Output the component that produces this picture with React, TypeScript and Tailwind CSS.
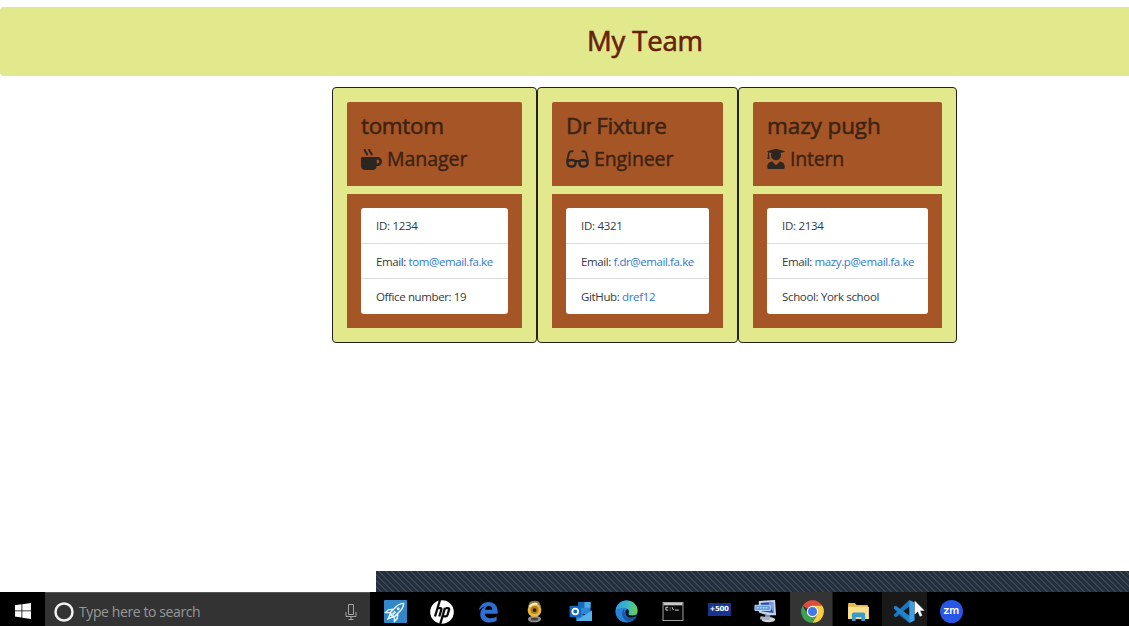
import React from "react";
import { FaGlasses, FaMugHot, FaUserGraduate } from "react-icons/fa";

type Row = { label: string; value: string; link?: boolean; tracking: string };
type Member = {
  name: string;
  nameClass: string;
  role: string;
  roleClass: string;
  width: string;
  icon: React.ReactNode;
  rows: Row[];
};

const team: Member[] = [
  {
    name: "tomtom",
    nameClass: "tracking-[-0.35px]",
    role: "Manager",
    roleClass: "tracking-[-0.05px]",
    width: "w-[205px]",
    icon: <FaMugHot className="mr-[5px] size-[21px]" />,
    rows: [
      { label: "ID: ", value: "1234", tracking: "tracking-[-0.3px]" },
      { label: "Email: ", value: "tom@email.fa.ke", link: true, tracking: "tracking-[-0.39px]" },
      { label: "Office number: ", value: "19", tracking: "tracking-[-0.38px]" },
    ],
  },
  {
    name: "Dr Fixture",
    nameClass: "tracking-[-0.35px]",
    role: "Engineer",
    roleClass: "tracking-[-0.1px]",
    width: "w-[201px]",
    icon: <FaGlasses className="mr-[5px] h-[20px] w-[23px]" />,
    rows: [
      { label: "ID: ", value: "4321", tracking: "tracking-[-0.3px]" },
      { label: "Email: ", value: "f.dr@email.fa.ke", link: true, tracking: "tracking-[-0.41px]" },
      { label: "GitHub: ", value: "dref12", link: true, tracking: "tracking-[-0.36px]" },
    ],
  },
  {
    name: "mazy pugh",
    nameClass: "tracking-[-0.1px]",
    role: "Intern",
    roleClass: "tracking-[-0.2px]",
    width: "w-[219px]",
    icon: <FaUserGraduate className="mr-[5px] h-[20px] w-[18px]" />,
    rows: [
      { label: "ID: ", value: "2134", tracking: "tracking-[-0.3px]" },
      { label: "Email: ", value: "mazy.p@email.fa.ke", link: true, tracking: "tracking-[-0.39px]" },
      { label: "School: ", value: "York school", tracking: "tracking-[-0.34px]" },
    ],
  },
];

function Card({ m }: { m: Member }) {
  return (
    <article className={`${m.width} h-[256px] shrink-0 rounded-[4px] border border-[#22231c] bg-[#e2e88c] p-[14px]`}>
      <header className="h-[84px] rounded-t-[2px] bg-[#a65526] pt-[10px] pr-[14px] pl-[14px] text-[#3b2314]">
        <h2 className={`h-[28px] text-[22.5px] leading-[28px] whitespace-nowrap [-webkit-text-stroke:0.5px] ${m.nameClass}`}>{m.name}</h2>
        <h3 className="mt-[6px] flex h-[26px] items-center text-[19.5px] leading-[26px] whitespace-nowrap">
          <span className="text-[#2b2622]">{m.icon}</span>
          <span className={`[-webkit-text-stroke:0.4px] ${m.roleClass}`}>{m.role}</span>
        </h3>
      </header>
      <div className="mt-2 h-[134px] bg-[#a65526] px-[14px] pt-[14px]">
        <ul className="overflow-hidden rounded-[3px] bg-white text-[11.5px] text-[#343a40]">
          {m.rows.map((r) => (
            <li key={r.label} className={`flex h-[35px] items-center border-b border-[#dcdcdc] pt-[1px] pl-[15px] whitespace-pre first:h-[36px] last:border-b-0 last:pb-[1px] ${r.tracking}`}>
              <span>{r.label}</span>
              <span className={r.link ? "text-[#3179cf]" : ""}>{r.value}</span>
            </li>
          ))}
        </ul>
      </div>
    </article>
  );
}

const Rocket = () => (
  <svg viewBox="0 0 24 24" className="size-[23px]">
    <rect width="24" height="24" rx="1" fill="#3287c8" />
    <g transform="rotate(45 12 12)">
      <path d="M12 0c3 3 3.500 7 3 11L15 17H9v-6C8.500 7 9 3 12 0zM8.500 12l-3 4v4l3.500-3zM15.500 12l3 4v4L15 17zM10 18h4l-2 5z" fill="none" stroke="#e8f4fb" strokeWidth="1.500" />
      <circle cx="12" cy="8" r="1.500" fill="#e8f4fb" />
      <path d="M11 12h2v4h-2z" fill="#e8f4fb" />
    </g>
  </svg>
);

const Hp = () => (
  <svg viewBox="0 0 24 24" className="size-[24px]">
    <circle cx="12" cy="12" r="11.800" fill="#fff" />
    <path d="M10 0 5 16.500M8 8.200h2.300q1.500 0 1 1.600L9.300 16.500M15 7.800 10.200 24M15.500 8.200h2.400q1.600 0 1.100 1.600l-1.500 5q-.5 1.500-2 1.500h-2" fill="none" stroke="#090909" strokeWidth="2.300" />
  </svg>
);

const LegacyEdge = () => (
  <svg viewBox="0 0 24 24" className="size-[22px]">
    <path d="M2 10.6C3 4.5 7.400 1 12.700 1c6 0 9.800 4.300 9.800 9.800v3H8.600c.2 3.300 3.100 4.900 6.400 4.900 2.500 0 4.500-.7 6.400-1.800v4.700c-2 1.200-4.600 1.900-7.700 1.900-6.300 0-10.200-3.600-10.200-9.100 0-3.800 2-6.900 5.600-8.300C5.900 6.600 3.600 8.300 2 10.600zM8.700 9.600h8c0-2.700-1.300-4.200-3.700-4.200S9 7 8.700 9.600z" fill="#2f6fd2" />
  </svg>
);

const Medal = () => (
  <svg viewBox="0 0 18 24" className="h-[23px] w-[17px]">
    <path d="M4 2q5-3 10 0l2 5H2z" fill="#8c7544" />
    <ellipse cx="9" cy="20" rx="7" ry="3.500" fill="#8e8e8e" />
    <ellipse cx="9" cy="20" rx="4" ry="1.600" fill="#444" />
    <circle cx="9" cy="10.500" r="7.300" fill="#e9b540" />
    <circle cx="9" cy="10.500" r="4.200" fill="#b27b1f" />
    <circle cx="9" cy="10.500" r="2" fill="#2b1e08" />
    <path d="M4 7q2-4 8-3" fill="none" stroke="#fff2b0" strokeWidth="2" />
  </svg>
);

const Outlook = () => (
  <svg viewBox="0 0 24 22" className="h-[21px] w-[24px]">
    <path d="M9 1h13v13H9z" fill="#2b86d9" />
    <path d="M15.500 1H22v6h-6.500z" fill="#4aa9e6" />
    <path d="M9 1h6.500v6H9z" fill="#1767ba" />
    <path d="M7 21h16.500V10L15 15 7 11z" fill="#2f8fdb" />
    <path d="m7 21 16.500-11v11z" fill="#58b2ea" />
    <rect y="5" width="12" height="12" rx="1" fill="#1467bc" />
    <circle cx="6" cy="11" r="3" fill="none" stroke="#fff" strokeWidth="1.800" />
  </svg>
);

const Edge = () => (
  <svg viewBox="0 0 24 24" className="size-[23px]">
    <defs>
      <linearGradient id="edgeTop" x1="0" y1="0.300" x2="1" y2="0.500">
        <stop offset="0" stopColor="#2d9ce0" />
        <stop offset=".5" stopColor="#39b8c5" />
        <stop offset="1" stopColor="#68ce55" />
      </linearGradient>
    </defs>
    <circle cx="12" cy="12" r="11.500" fill="#2784d8" />
    <path d="M.7 11C1.300 5 6 .5 12 .5c7 0 11.500 5 11.500 10 0 3.500-2.500 6-6 6-2.600 0-4-1-3.500-2 2-3-.2-6.500-4.500-6.500C5.500 8 2 9 .7 11z" fill="url(#edgeTop)" />
    <path d="M9.500 9C6 12 7 20 13 22.500c4 .8 7.500-1.500 9.500-5-4 2-10 1-12-3-.8-2-.6-4-1-5.500z" fill="#1958a5" />
    <path d="M13.800 14.700c1.200-1.600.8-4-1-5.200-2.300 1-2.500 4.500-.8 7 2.500 3 7.500 2.500 11.500-.3l1-2c-3 2.300-10.200 2.600-10.700.5z" fill="#041320" />
  </svg>
);

const Terminal = () => (
  <svg viewBox="0 0 22 20" className="h-[19px] w-[22px]">
    <rect x=".5" y=".5" width="21" height="19" fill="#090909" stroke="#a9a9a9" />
    <path d="M1 1h20v2.500H1z" fill="#c8c8c8" />
    <path d="M6 5.500H3.500v3H6M8 6v.8M8 8v.8M10 5.500l1.500 3M13 8.500h4" fill="none" stroke="#ddd" />
  </svg>
);

const Computer = () => (
  <svg viewBox="0 0 24 24" className="size-[23px]">
    <path d="m5 1 17-1 1 16-9 0L5 13z" fill="#c7d4e8" />
    <path d="m7 3 13-1 .5 11.500L8 12z" fill="#2949ae" />
    <path d="m15 2.500 5-.5v11z" fill="#799de2" />
    <path d="M1 5.500h16V11H1z" fill="#609de3" stroke="#c1dafa" />
    <path d="M3 8.200h12" stroke="#e4f2ff" strokeDasharray="2 1" />
    <path d="m12 15 5 1v3h-6z" fill="#8895a9" />
    <ellipse cx="15" cy="20.500" rx="7" ry="2.800" fill="#d2d6dc" />
    <path d="m7 17 10 1-1 3-10-1z" fill="#aab3c0" />
  </svg>
);

const Chrome = () => (
  <svg viewBox="0 0 24 24" className="size-[23px]">
    <path d="M12 12 1.780 6.100A11.800 11.800 0 0 1 22.220 6.100z" fill="#dd4c3e" />
    <path d="M12 12V6.100h10.220A11.800 11.800 0 0 1 12 23.800l-.2 0 5.300-8.900z" fill="#fbcd42" />
    <path d="M12 12l5.110 2.950L12 23.800A11.800 11.800 0 0 1 1.780 6.100l5.110 8.850z" fill="#3f9f52" />
    <circle cx="12" cy="12" r="6" fill="#f4f4f4" />
    <circle cx="12" cy="12" r="4.700" fill="#4078e6" />
  </svg>
);

const Folder = () => (
  <svg viewBox="0 0 22 19" className="h-[18px] w-[21px]">
    <path d="M0 1q0-1 1-1h6l2 2h11q1 0 1 1v14H0z" fill="#e7b84d" />
    <path d="M0 4h22v13H0z" fill="#fae18b" />
    <path d="M4 19v-7q0-2 2-2h10q2 0 2 2v7h-4v-4H8v4z" fill="#3b9acb" />
  </svg>
);

const Code = () => (
  <svg viewBox="0 0 24 24" className="size-[23px]">
    <path d="m17 0-10 9-4-3-2 1.200v1.600L17 24l1-6-12-9.500z" fill="#1f75bd" transform="matrix(1 0 0 -1 0 24)" />
    <path d="m1 7 2-1 15 11-1 7L1 9z" fill="#2382cc" />
    <path d="m17 0 5.500 2.500v19L17 24z" fill="#3ca0e7" />
  </svg>
);

const Cursor = () => (
  <svg viewBox="0 0 12 19" className="absolute top-[8px] left-[32px] h-[18px] w-[11px]">
    <path d="M1 1v14l3.200-3 2.300 5.500 2.200-1L6.500 11H11z" fill="#fff" stroke="#fff" strokeWidth=".5" />
  </svg>
);

const apps: { name: string; box: string; icon: React.ReactNode }[] = [
  { name: "rocket", box: "w-[50px]", icon: <Rocket /> },
  { name: "hp", box: "w-[43px]", icon: <Hp /> },
  { name: "legacy", box: "w-[50px]", icon: <LegacyEdge /> },
  { name: "medal", box: "w-[43px]", icon: <Medal /> },
  { name: "outlook", box: "w-[49px]", icon: <Outlook /> },
  { name: "edge", box: "w-[43px]", icon: <Edge /> },
  { name: "terminal", box: "w-[49px]", icon: <Terminal /> },
  {
    name: "trading",
    box: "w-[44px]",
    icon: <span className="mb-[5px] flex h-[13px] w-[23px] items-center justify-center bg-[#17348f] font-['DejaVu_Sans'] text-[7px] font-bold tracking-[-0.4px] text-white">+500</span>,
  },
  { name: "computer", box: "w-[49px]", icon: <Computer /> },
  { name: "chrome", box: "w-[43px] bg-[#343434] border-r border-[#1b1b1b] pl-[2px]", icon: <Chrome /> },
  { name: "folder", box: "w-[49px] pl-[2px]", icon: <Folder /> },
  { name: "code", box: "relative w-[45px] bg-[#191919]", icon: <><Code /><Cursor /></> },
  {
    name: "zoom",
    box: "w-[47px] pl-[1px]",
    icon: <span className="flex size-[23px] items-center justify-center rounded-full bg-[#2857e5] pb-[2px] font-['Inter'] text-[11px] font-semibold tracking-[-0.2px] text-white">zm</span>,
  },
];

function Taskbar() {
  return (
    <footer className="flex h-[34px] w-full bg-black">
      <div className="flex w-[45px] items-center justify-center pt-[3px]">
        <svg viewBox="0 0 16 16" className="size-[16px]">
          <path d="M0 2.300 6.500 1.300v6.200H0zM7.300 1.200 16 0v7.500H7.300zM0 8.300h6.500v6.200L0 13.600zM7.300 8.300H16V16l-8.700-1.300z" fill="#fff" />
        </svg>
      </div>
      <div className="flex w-[325px] items-center border-t border-[#555] bg-[#333] pt-[4px] pr-[13px] pl-[9px]">
        <svg viewBox="0 0 20 20" className="size-[20px]">
          <circle cx="10" cy="10" r="8.500" fill="none" stroke="#f1f1f1" strokeWidth="2.500" />
        </svg>
        <span className="ml-[5px] grow text-[14px] leading-[20px] tracking-[-0.4px] whitespace-nowrap text-[#989898]">Type here to search</span>
        <svg viewBox="0 0 12 16" className="h-[16px] w-[12px]">
          <path d="M3.500.5h5v10h-5zM1 8v4.500h10V8M6 12.500v3M3.500 15.500h5" fill="none" stroke="#a5a5a5" />
        </svg>
      </div>
      {apps.map((a) => (
        <div key={a.name} className={`flex h-[34px] shrink-0 items-center justify-center pt-[5px] ${a.box}`}>
          {a.icon}
        </div>
      ))}
    </footer>
  );
}

export default function App() {
  return (
    <div className="flex h-[626px] w-[1129px] flex-col overflow-hidden bg-white pt-[7px] font-['Open_Sans','Noto_Sans',sans-serif]">
      <header className="h-[69px] shrink-0 rounded-l-[4px] bg-[#e2e88c] pt-[15px] pl-[587px]">
        <h1 className="text-[27.5px] leading-[38px] tracking-[-0.15px] whitespace-nowrap text-[#692009] [-webkit-text-stroke:0.6px]">My Team</h1>
      </header>
      <main className="flex grow pt-[11px] pl-[332px]">
        {team.map((m) => (
          <Card key={m.name} m={m} />
        ))}
      </main>
      <div className="ml-[376px] h-[21px] shrink-0 bg-[repeating-linear-gradient(45deg,#232f3d_0px,#232f3d_3px,#3a4652_3px,#3a4652_4.400px)]" />
      <Taskbar />
    </div>
  );
}
